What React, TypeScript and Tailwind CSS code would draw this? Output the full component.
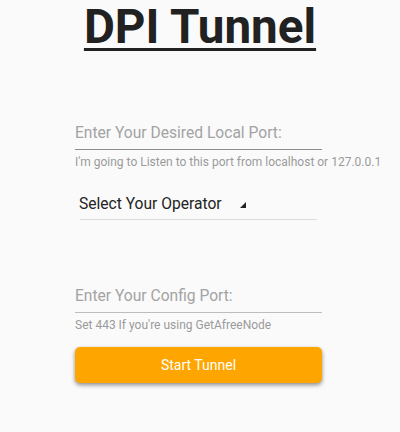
import React from "react";

const font = { fontFamily: "Roboto, 'Noto Sans', sans-serif" };

const App = () => {
  return (
    <div className="w-[400px] h-[432px] bg-[#fafafa] overflow-hidden" style={font}>
      <div className="flex justify-center -mt-[1px]">
        <h1 className="text-[47.6px] leading-[56px] font-bold text-[#212121] underline decoration-[3px] underline-offset-[5px]">
          DPI Tunnel
        </h1>
      </div>

      <div className="ml-[75px] w-[247px] mt-[68px]">
        <div className="text-[15.6px] leading-[20px] text-[#a3a3a3] pb-[6px] border-b border-[#8c8c8c]">
          Enter Your Desired Local Port:
        </div>
        <p className="text-[12px] leading-[16px] text-[#9a9a9a] mt-[4px] whitespace-nowrap">
          I'm going to Listen to this port from localhost or 127.0.0.1
        </p>
      </div>

      <div className="ml-[80px] w-[237px] mt-[24px] border-b border-[#dcdcdc] pb-[5px]">
        <div className="flex items-center">
          <span className="text-[15.6px] leading-[20px] text-[#222] -ml-[1px]">Select Your Operator</span>
          <svg width="6" height="6" viewBox="0 0 6 6" className="ml-[18px] mt-[2px]">
            <polygon points="6,0 6,6 0,6" fill="#222" />
          </svg>
        </div>
      </div>

      <div className="ml-[75px] w-[247px] mt-[66px]">
        <div className="text-[15.6px] leading-[20px] text-[#a3a3a3] pb-[6px] border-b border-[#bdbdbd]">
          Enter Your Config Port:
        </div>
        <p className="text-[12px] leading-[16px] text-[#9a9a9a] mt-[4px]">
          Set 443 If you're using GetAfreeNode
        </p>
      </div>

      <button className="ml-[75px] mt-[14px] w-[247px] h-[36px] rounded-[5px] bg-[#ffa500] text-white text-[14px] shadow-[0_2px_4px_rgba(0,0,0,0.45)] flex items-center justify-center">
        Start Tunnel
      </button>
    </div>
  );
};

export default App;
